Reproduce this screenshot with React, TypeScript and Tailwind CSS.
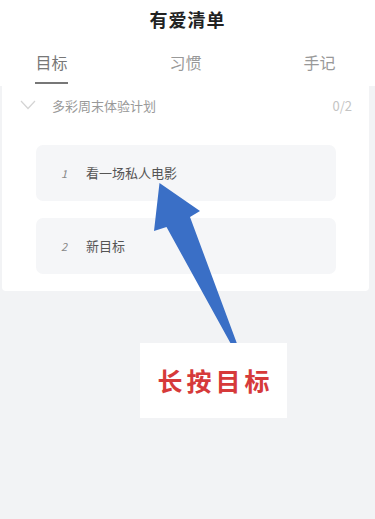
import React from "react";

const font = { fontFamily: '"Noto Sans CJK SC", "Noto Sans", sans-serif' };

export default function App() {
  return (
    <div className="relative w-[375px] h-[519px] overflow-hidden bg-[#f2f3f5]" style={font}>
      <div className="bg-white">
        <div className="h-[37px] flex items-center justify-center">
          <span className="text-[18px] font-bold tracking-[1px] text-[#222] leading-none">有爱清单</span>
        </div>
        <div className="h-[49px] flex justify-between pl-[35px] pr-[39px]">
          <div className="flex flex-col items-center justify-end">
            <span className="text-[16px] leading-none text-[#777]">目标</span>
            <div className="mt-[12px] mb-[2px] h-[2px] w-[33px] bg-[#777]" />
          </div>
          <div className="flex flex-col items-center justify-end">
            <span className="text-[16px] leading-none text-[#999]">习惯</span>
            <div className="mt-[12px] mb-[2px] h-[2px] w-[33px]" />
          </div>
          <div className="flex flex-col items-center justify-end">
            <span className="text-[16px] leading-none text-[#999]">手记</span>
            <div className="mt-[12px] mb-[2px] h-[2px] w-[33px]" />
          </div>
        </div>
      </div>

      <div className="ml-[2px] w-[367px] bg-white rounded-b-[4px] pb-[17px]">
        <div className="h-[38px] flex items-center pl-[18px] pr-[17px]">
          <svg width="16" height="10" viewBox="0 0 16 10" className="mr-[16px]">
            <path d="M1 1 L8 8.5 L15 1" fill="none" stroke="#d4d4d4" strokeWidth="1.2" />
          </svg>
          <span className="text-[13px] text-[#999] leading-none">多彩周末体验计划</span>
          <span className="ml-auto text-[13px] text-[#c4c4c4] leading-none">0/2</span>
        </div>
        <div className="mt-[21px] ml-[34px] w-[300px] flex flex-col gap-[17px]">
          <div className="h-[56px] rounded-[7px] bg-[#f5f6f8] flex items-center pl-[25px]">
            <span className="w-[25px] text-[11px] italic text-[#888]">1</span>
            <span className="text-[13px] text-[#555]">看一场私人电影</span>
          </div>
          <div className="h-[56px] rounded-[7px] bg-[#f5f6f8] flex items-center pl-[25px]">
            <span className="w-[25px] text-[11px] italic text-[#888]">2</span>
            <span className="text-[13px] text-[#555]">新目标</span>
          </div>
        </div>
      </div>

      <svg className="absolute left-0 top-0" width="375" height="519" viewBox="0 0 375 519">
        <polygon
          points="159.5,183 200,211 190,217 237.5,345 231.5,345 166.5,227 154,231"
          fill="#3a6fc6"
        />
      </svg>
      <div className="absolute left-[140px] top-[343px] w-[147px] h-[75px] bg-white flex items-center justify-center">
        <span className="text-[25px] font-semibold tracking-[4px] text-[#d63a3a] leading-none pl-[4px]">长按目标</span>
      </div>
    </div>
  );
}
